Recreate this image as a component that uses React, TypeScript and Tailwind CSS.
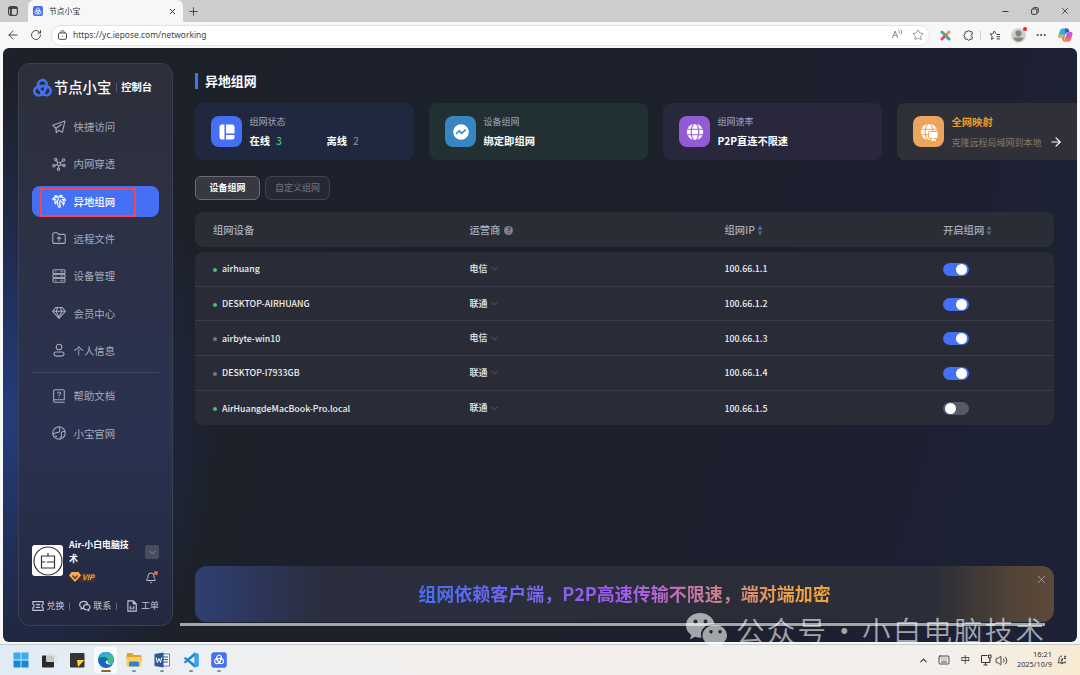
import { ReactNode } from 'react'
import {
  ArrowLeft,
  ArrowRight,
  Bell,
  ChevronDown,
  ChevronUp,
  Ellipsis,
  Keyboard,
  Minus,
  Plus,
  RotateCw,
  Star,
  Volume2,
  X,
} from 'lucide-react'

const devices = [
  { name: 'airhuang', online: true, isp: '电信', ip: '100.66.1.1', on: true },
  { name: 'DESKTOP-AIRHUANG', online: true, isp: '联通', ip: '100.66.1.2', on: true },
  { name: 'airbyte-win10', online: false, isp: '电信', ip: '100.66.1.3', on: true },
  { name: 'DESKTOP-I7933GB', online: false, isp: '联通', ip: '100.66.1.4', on: true },
  { name: 'AirHuangdeMacBook-Pro.local', online: true, isp: '联通', ip: '100.66.1.5', on: false },
]

function Icon({ children, size = 14, width = 1.1 }: { children: ReactNode; size?: number; width?: number }) {
  return (
    <svg
      width={size}
      height={size}
      viewBox="0 0 14 14"
      fill="none"
      stroke="currentColor"
      strokeWidth={width}
      strokeLinecap="round"
      strokeLinejoin="round"
      className="shrink-0"
    >
      {children}
    </svg>
  )
}

const mainNav = [
  { label: '快捷访问', icon: <path d="M.8 5.200 13 1l-2.600 11.200-3.800-1.900L4.300 12.700 4 8.500ZM4 8.500 9.300 4.500" /> },
  {
    label: '内网穿透',
    icon: (
      <>
        <circle cx="7" cy="7" r="1.700" />
        <circle cx="3.700" cy="2.600" r="1.200" />
        <circle cx="11.500" cy="3" r="1.200" />
        <circle cx="1.900" cy="8.800" r="1.200" />
        <circle cx="12" cy="8.600" r="1.200" />
        <circle cx="6.500" cy="12.200" r="1.200" />
        <path d="m4.400 3.600 1.500 2M10.600 3.800 8.300 5.900M3 8.400l2.400-.800M10.900 8.200l-2.300-.600M6.600 11l.200-2.300" />
      </>
    ),
  },
  {
    label: '异地组网',
    active: true,
    icon: (
      <>
        <path d="M6.200 3.800C5.600 1.600 4 1 2.800 2c1 .1 1.500.7 1.700 1.400C2.300 2.800.8 4 .8 5.800c1-.8 2-.8 3-.3C2.300 6.500 2.200 9 3.800 10c0-1.500.4-2.500 1.400-3.400" />
        <path d="M6.600 3.800C7 1.600 8.700.6 10.200 1.800c-1 .1-1.600.7-1.900 1.500 2.500-.7 4.700.5 5.100 3.400-1-1.200-2-1.500-3.200-1.200 2 .9 2.600 3.500 1.300 5.600-.4-1.800-1-2.800-2.200-3.500" />
        <path d="M6.500 4.300c-1.300 2.700-1.400 6 .3 8.900l1.700-.3C7.200 10.500 7.400 8 8.500 6" />
      </>
    ),
  },
  {
    label: '远程文件',
    icon: (
      <>
        <path d="M.800 11.200V2.900c0-.700.500-1.200 1.200-1.200h3l1.600 1.700H12c.700 0 1.200.500 1.200 1.200v6.600c0 .700-.500 1.200-1.200 1.200H2c-.700 0-1.200-.500-1.200-1.200Z" />
        <path d="M7 10V6M5.200 7.600 7 5.800l1.800 1.800" />
      </>
    ),
  },
  {
    label: '设备管理',
    icon: (
      <>
        <rect x="1" y=".8" width="12" height="3.800" rx="1" />
        <rect x="1" y="5.100" width="12" height="3.800" rx="1" />
        <rect x="1" y="9.400" width="12" height="3.800" rx="1" />
        <path d="M3.500 2.700h.600M9 2.700h1.800M3.500 7h.600M9 7h1.800M3.500 11.300h.600M9 11.300h1.800" />
      </>
    ),
  },
  {
    label: '会员中心',
    icon: (
      <>
        <path d="M3.700 1.500h6.600L13.300 5.300 7 12.300.700 5.300Z" />
        <path d="M1 5.300h12M5.500 1.800 4.300 5.300 7 11.800l2.700-6.500L8.500 1.800" />
      </>
    ),
  },
  {
    label: '个人信息',
    icon: (
      <>
        <circle cx="7" cy="4" r="2.800" />
        <path d="M3.600 9h6.800c1 0 1.600.8 1.600 1.600 0 1.400-1 2.500-2.400 2.500H4.400C3 13.100 2 12 2 10.600 2 9.800 2.600 9 3.600 9Z" />
      </>
    ),
  },
]

const helpNav = [
  {
    label: '帮助文档',
    icon: (
      <>
        <path d="M12.300 10.500V2c0-.700-.500-1.200-1.200-1.200H3C2.200.800 1.600 1.300 1.600 2v9.700c0 .900.600 1.500 1.400 1.500h9.300M1.700 10.800h10.600" />
        <path d="M5.700 4.200c.200-1.600 2.800-1.500 2.800.1 0 1.100-1.400 1-1.400 2.200M7.100 8.200v.1" />
      </>
    ),
  },
  {
    label: '小宝官网',
    icon: (
      <>
        <circle cx="7" cy="7" r="6.200" />
        <path d="M7.500 1C6.500 2 8.300 3 7.800 4.800 7.400 6.800 5.500 6.500 4 6.800 2.500 7 2.200 8 1 8.200M13 5.600c-1.800-.4-3.500.1-3.800 1.500-.2 1.500.8 2.200.3 3.500-.4.8-1.200.9-1.700 2.200M3.600 9.800l1 .8" />
      </>
    ),
  },
]

const loop = 'M13.500 17.500C9 16.500 6 12 6.800 8.200 7.800 3 14 1.800 16.300 6c1.100 2.200.9 4.600.2 6.600'

// three interlocked loops of the brand mark
function Knot({ size, color, width = 2.8 }: { size: number; color: string; width?: number }) {
  return (
    <svg width={size} height={size} viewBox="0 0 24 24" fill="none" stroke={color} strokeWidth={width} strokeLinecap="round" className="shrink-0">
      <path d={loop} />
      <path d={loop} transform="rotate(120 12 13.500)" />
      <path d={loop} transform="rotate(240 12 13.500)" />
    </svg>
  )
}

function NavItem({ label, icon, active }: { label: string; icon: ReactNode; active?: boolean }) {
  return (
    <div
      className={
        active
          ? 'relative flex h-[31px] items-center gap-2 rounded-lg bg-[#456ff5] pl-[19.500px] font-medium text-white'
          : 'flex h-[31px] items-center gap-2 pl-[19.500px] text-[#a7aaba]'
      }
    >
      <Icon>{icon}</Icon>
      <span className="mt-px text-[10.400px]">{label}</span>
      {active && <div className="absolute top-0.5 left-[8px] h-[29px] w-[96px] border-2 border-[#f04a4e]"></div>}
    </div>
  )
}

function Browser() {
  return (
    <header className="shrink-0 text-[#333]">
      <div className="flex h-[22px] items-center bg-[#cdcdcd]">
        <div className="flex w-7 justify-center pr-0.5">
          <svg width="10" height="10" viewBox="0 0 10 10" fill="none" stroke="#222">
            <rect x=".7" y=".7" width="8.600" height="8.600" rx="1.500" />
            <path d="M1 2h8M3 2v7" strokeWidth="1.500" />
          </svg>
        </div>
        <div className="flex h-full w-[155px] items-center rounded-t-md bg-[#f7f7f7] pr-[6px] pl-[5px]">
          <div className="flex size-[10px] items-center justify-center rounded-[2px] bg-[#456ff5]">
            <Knot size={8} color="#fff" width={2.5} />
          </div>
          <span className="ml-[6px] text-[7.800px]">节点小宝</span>
          <X size={9} className="ml-auto" strokeWidth={2.6} />
        </div>
        <Plus size={13} className="ml-[4px]" strokeWidth={1.6} />
        <div className="mr-[10px] ml-auto flex items-center gap-[21px]">
          <Minus size={9} strokeWidth={2.5} />
          <svg width="8" height="8" viewBox="0 0 8 8" fill="none" stroke="#333">
            <rect x=".6" y="2" width="5.300" height="5.300" rx="1" />
            <path d="M2.200 2V1.500Q2.200.6 3.200.6h2.600q1.500 0 1.500 1.500v2.600q0 1-1 1H6" />
          </svg>
          <X size={10} strokeWidth={2} />
        </div>
      </div>
      <div className="flex h-[26px] items-center bg-[#f7f7f7]">
        <ArrowLeft size={14} strokeWidth={1.5} className="ml-[6px]" />
        <RotateCw size={12} strokeWidth={1.7} className="ml-[10px]" />
        <div className="ml-[9px] flex h-[21px] w-[879px] items-center rounded-full border border-[#e3e3e3] bg-white pr-[5px] pl-[6px]">
          <svg width="9" height="10" viewBox="0 0 9 10" fill="none" stroke="#333" strokeWidth=".9">
            <rect x=".5" y="3" width="8" height="6.300" rx="1.200" />
            <path d="M2.700 3c0-3.200 3.600-3.200 3.600 0M4.500 5.800v.8" />
          </svg>
          <span className="ml-[6px] font-['Noto_Sans'] text-[8.450px] leading-none text-[#444]">https://yc.iepose.com/networking</span>
          <span className="ml-auto font-['Noto_Sans'] text-[9.500px] leading-none text-[#777]">A</span>
          <svg width="5" height="8" viewBox="0 0 5 8" fill="none" stroke="#777" strokeWidth=".8" className="-mt-1">
            <path d="M.5 1.500c1 .7 1 2 .5 3M2.500.5c1.500 1.500 1.500 3.500.5 5" />
          </svg>
          <Star size={12} strokeWidth={1.5} className="ml-[9px] text-[#777]" />
        </div>
        <svg width="11" height="11" viewBox="0 0 11 11" strokeWidth="3" strokeLinecap="round" className="ml-[10px]">
          <path d="m2 2 3.500 3.500" stroke="#45a9a5" />
          <path d="m9 2-3.500 3.500" stroke="#ef9650" />
          <path d="m2 9 3.500-3.500" stroke="#ef4663" />
          <path d="m9 9-3.500-3.500" stroke="#41a5a2" />
        </svg>
        <svg width="11" height="11" viewBox="0 0 11 11" fill="none" stroke="#444" strokeLinejoin="round" className="ml-[12px]">
          <path d="M3 1.700h1.500c.2-1.500 2-1.500 2.200 0h1.600q1 0 1 1v1.600c-2 0-2 2.400 0 2.400v1.600q0 1-1 1H6.700c-.2 1.500-2 1.500-2.200 0H3q-1 0-1-1V6.700C.3 6.600.3 4.500 2 4.300V2.700q0-1 1-1Z" />
        </svg>
        <div className="ml-[6px] h-[10px] w-px bg-[#d2d2d2]"></div>
        <svg width="12" height="11" viewBox="0 0 12 11" fill="none" stroke="#444" strokeLinejoin="round" className="ml-[8px]">
          <path d="M7 3.800 5.200 1 4 3.700 1 4l2.200 2.200-.7 3.100L5 8M7.500 4.500H11M7.500 6.700H11M7.500 8.900H11" />
        </svg>
        <div className="relative ml-[10px]">
          <svg width="15" height="15" viewBox="0 0 15 15">
            <circle cx="7.500" cy="7.500" r="7.300" fill="#d0cecb" />
            <circle cx="7.500" cy="5.500" r="3" fill="#88827e" />
            <path d="M2.500 10.500q0-1 1-1h8q1 0 1 1-2 3-5 3t-5-3Z" fill="#88827e" />
          </svg>
          <div className="absolute -top-px -right-px size-1 rounded-full bg-[#e52828]"></div>
        </div>
        <Ellipsis size={12} className="ml-[9px]" />
        <svg width="15" height="14" viewBox="0 0 15 14" className="ml-[11px]">
          <path d="M4.500.500h4.200L6.500 8.500Q6 10 4.500 10H2Q0 10 .500 7.500L2 2.500Q2.700.500 4.500.500Z" fill="#38a9d8" />
          <path d="M.700 6.500h5.500l-.500 2Q5 10 4 10H2Q0 10 .700 6.500Z" fill="#b8c54a" />
          <path d="M6.500 13.500h4.200q1.600 0 2.200-2l1.500-5Q15 4 13 4h-2.500Q9 4 8.600 5.500Z" fill="#c45bd0" />
          <path d="M7 10h6q-.800 3.500-2.300 3.500H6Z" fill="#f08050" />
          <path d="M7 .500h2.500q1 0 1.500 2l.500 1.500H10Q8.500 4 8 5.500L7.500 7Z" fill="#2157d2" />
          <path d="M4 10q1.500 0 2.200-1.500L7 7l-1 6.500Q4.500 13.500 4 10Z" fill="#f26d4d" />
        </svg>
      </div>
    </header>
  )
}

function Sidebar() {
  return (
    <aside className="flex w-[155px] shrink-0 flex-col rounded-xl border border-[#3b4153] bg-[linear-gradient(180deg,#2d2f3a_0%,#2c3145_30%,#2a3250_65%,#232941_100%)] px-[13px]">
      <div className="flex h-[46px] items-center text-white">
        <Knot size={21} color="#456ff5" />
        <span className="ml-px text-[14.300px] leading-none font-medium">节点小宝</span>
        <div className="mx-[4.500px] h-[9px] w-px bg-[#555a69]"></div>
        <span className="text-[10.300px] leading-none font-bold">控制台</span>
      </div>
      <nav className="mt-px flex flex-col gap-[6.300px]">
        {mainNav.map((item) => (
          <NavItem key={item.label} {...item} />
        ))}
      </nav>
      <div className="mt-[6px] mb-[7.500px] h-px shrink-0 bg-[#3f4661]"></div>
      <nav className="flex flex-col gap-[6.300px]">
        {helpNav.map((item) => (
          <NavItem key={item.label} {...item} />
        ))}
      </nav>

      {/* User */}
      <div className="mt-auto flex h-[47px]">
        <div className="mt-[8px] flex size-[31px] shrink-0 items-center justify-center rounded-[3px] bg-white">
          <svg width="30" height="30" viewBox="0 0 30 30" fill="none" stroke="#333" strokeWidth="1.200">
            <circle cx="15" cy="15" r="14" />
            <path d="M8.500 10h13v12h-13ZM8.500 16h4M14 16h7.500M15 7v3" />
          </svg>
        </div>
        <div className="ml-[6px] w-[64px]">
          <p className="mt-px text-[8.900px] leading-[14px] font-bold text-white">Air-小白电脑技术</p>
          <div className="mt-[6px] flex items-center">
            <svg width="12" height="10" viewBox="0 0 12 10" className="z-10">
              <path d="M2.500 0h7L12 3.500 6 10 0 3.500Z" fill="#f6ac52" />
              <path d="m3.500 3.500 2.500 3 2.500-3" fill="none" stroke="#5c3518" strokeWidth="1.400" />
            </svg>
            <span className="-ml-1 flex h-[9px] items-center rounded-sm bg-[#45302a] pr-[2px] pl-[5px] text-[7.500px] leading-none font-bold text-[#f0a650] italic">VIP</span>
          </div>
        </div>
        <div className="ml-auto flex flex-col items-center">
          <div className="mt-[8px] flex size-[14px] items-center justify-center rounded-[2px] bg-[#484c5d] text-[#8e919d]">
            <ChevronDown size={11} />
          </div>
          <div className="relative mt-[13px] mr-[2px] text-[#c4c7d3]">
            <Bell size={12} strokeWidth={1.9} />
            <div className="absolute -top-px -right-px size-1 rounded-full bg-[#f76b3b]"></div>
          </div>
        </div>
      </div>
      <div className="mt-[15px] mb-[12px] flex h-[14px] items-center justify-between text-[9px] text-[#c3c6d2]">
        <div className="flex items-center gap-[2.500px]">
          <Icon size={12} width={1.4}>
            <path d="M1 2h12v3c-2 .5-2 3.500 0 4v3H1V9c2-.5 2-3.500 0-4ZM5 5.500h4M5 8.500h4" />
          </Icon>
          兑换
        </div>
        <div className="-ml-1 h-[7px] w-px bg-[#646a7d]"></div>
        <div className="flex items-center gap-[2px]">
          <Icon size={12} width={1.4}>
            <path d="M5 9.500 2.500 10.500l.3-1.600C-.8 6 1 1.500 5.500 1.500c2.500 0 4.200 1.500 4.500 3.300M9 5.200c-5 .3-5 6 0 6.200l2.500 1-.2-1.500c3-2 1.200-5.700-2.300-5.700Z" />
          </Icon>
          联系
        </div>
        <div className="-ml-1 h-[7px] w-px bg-[#646a7d]"></div>
        <div className="flex items-center gap-[3px]">
          <Icon size={12} width={1.3}>
            <path d="M8.500 1H2.200v12h9.800V4.500ZM8.500 1v3.500H12M5 10.500v-3M7 10.500V9M9.200 10.500V7.500" />
          </Icon>
          工单
        </div>
      </div>
    </aside>
  )
}

function GlobeGlyph({ stroke }: { stroke: string }) {
  return (
    <>
      <circle cx="9" cy="9" r="8.200" fill="#fff" />
      <g fill="none" stroke={stroke} strokeWidth="1.100">
        <ellipse cx="9" cy="9" rx="3.800" ry="8.600" />
        <path d="M0 6.200h18M0 11.800h18" />
      </g>
    </>
  )
}

function Card({ className, iconClass, icon, children }: { className: string; iconClass: string; icon: ReactNode; children: ReactNode }) {
  return (
    <div className={`flex h-[57px] w-[219px] shrink-0 items-center rounded-lg pl-4 ${className}`}>
      <div className={`flex size-[31px] shrink-0 items-center justify-center rounded-lg ${iconClass}`}>
        <svg width="18" height="18" viewBox="0 0 18 18">
          {icon}
        </svg>
      </div>
      <div className="ml-[7.500px]">{children}</div>
    </div>
  )
}

function Cards() {
  return (
    <div className="flex gap-[15px] overflow-hidden">
      <Card
        className="bg-[#20283f]"
        iconClass="bg-[#456ff5]"
        icon={
          <path
            d="M4 1.500h2.500v15H4q-2.500 0-2.500-2.500V4Q1.500 1.500 4 1.500ZM8 1.500h6q2.500 0 2.500 2.500v6.500H8ZM8 12h8.500v2q0 2.500-2.500 2.500H8Z"
            fill="#fff"
          />
        }
      >
        <p className="text-[9px] leading-[14px] text-[#a2a6b4]">组网状态</p>
        <div className="mt-[3px] flex text-[10.300px] leading-[17px] font-bold text-white">
          <span className="w-[77px]">
            在线<span className="ml-[6px] font-medium text-[#43bd7d]">3</span>
          </span>
          <span>
            离线<span className="ml-[6px] font-normal text-[#8e93a1]">2</span>
          </span>
        </div>
      </Card>
      <Card
        className="bg-[#203033]"
        iconClass="bg-[#3985c0]"
        icon={
          <>
            <circle cx="9" cy="9" r="7.800" fill="#fff" />
            <path d="m4 11 3.200-3.200 2.300 2.600L14 6.500" fill="none" stroke="#3985c0" strokeWidth="1.600" />
          </>
        }
      >
        <p className="text-[9px] leading-[14px] text-[#a2a6b4]">设备组网</p>
        <p className="mt-[3px] text-[10.300px] leading-[17px] font-bold text-white">绑定即组网</p>
      </Card>
      <Card className="bg-[#29273c]" iconClass="bg-[#935bd3]" icon={<GlobeGlyph stroke="#935bd3" />}>
        <p className="text-[9px] leading-[14px] text-[#a2a6b4]">组网速率</p>
        <p className="mt-[3px] text-[10.200px] leading-[17px] font-bold text-white">P2P直连不限速</p>
      </Card>
      <Card
        className="bg-[#303138]"
        iconClass="bg-[#eba55d]"
        icon={
          <>
            <GlobeGlyph stroke="#eba55d" />
            <rect x="8.500" y="8.500" width="9.500" height="7" rx="1" fill="#fff" stroke="#eba55d" />
            <path d="M11 17h5M13.200 15v2" stroke="#fff" strokeWidth="1.500" />
          </>
        }
      >
        <p className="text-[10.300px] leading-[17px] font-bold text-[#f2992e]">全网映射</p>
        <div className="mt-[4px] flex items-center text-[9px] leading-[17px] whitespace-nowrap text-[#8a7768]">
          克隆远程局域网到本地
          <ArrowRight size={14} className="ml-[7px] text-white" />
        </div>
      </Card>
    </div>
  )
}

function Sorter({ up }: { up: string }) {
  return (
    <svg width="6" height="11" viewBox="0 0 6 11" className="ml-[2px]">
      <path d="M3 .5 5.300 4.700H.700Z" fill={up} />
      <path d="M3 10.500.700 6.300h4.600Z" fill="#646873" />
    </svg>
  )
}

function Table() {
  return (
    <>
      <div className="mt-[12px] flex h-[35px] items-center rounded-lg bg-[#292e36] pt-px pl-[18px] text-[10.300px] font-medium text-[#a9acb9]">
        <span className="w-[256.500px]">组网设备</span>
        <span className="flex w-[255px] items-center">
          运营商
          <span className="ml-[4px] flex size-[9px] items-center justify-center rounded-full bg-[#7d808d] text-[7px] leading-none font-bold text-[#292e36]">?</span>
        </span>
        <span className="flex w-[218.500px] items-center">
          组网IP
          <Sorter up="#456ff5" />
        </span>
        <span className="flex items-center">
          开启组网
          <Sorter up="#646873" />
        </span>
      </div>
      <div className="mt-[5px] rounded-lg bg-[#292c37]">
        {devices.map((d) => (
          <div
            key={d.name}
            className="flex h-[34.700px] items-center border-b border-[#3a3d49] pl-[18px] text-[8.800px] font-medium text-[#eeeff3] last:border-b-0"
          >
            <div className="flex w-[256.500px] items-center">
              <div className={`mt-0.5 mr-[5px] size-[4px] rounded-full ${d.online ? 'bg-[#4abc82]' : 'bg-[#737785]'}`}></div>
              {d.name}
            </div>
            <div className="flex w-[255px] items-center text-[9px] font-bold text-[#d5d7df]">
              {d.isp}
              <ChevronDown size={11} className="ml-[1.500px] text-[#626672]" />
            </div>
            <span className="w-[218.500px]">{d.ip}</span>
            <div
              className={`mt-px flex h-[13px] w-[26px] items-center rounded-full px-[2px] ${d.on ? 'justify-end bg-[#456ff5]' : 'bg-[#575a68]'}`}
            >
              <div className="size-[11px] rounded-full bg-white"></div>
            </div>
          </div>
        ))}
      </div>
    </>
  )
}

function Console() {
  return (
    <section className="mx-[3px] flex h-[594px] overflow-hidden rounded-md bg-[radial-gradient(ellipse_215px_330px_at_0%_62%,#243d7d_0%,#202c50_50%,transparent_100%),linear-gradient(105deg,#1d2129_0%,#1c202b_55%,#1c2136_100%)] pt-[15px] pl-[15px]">
      <div className="flex h-[563px]">
        <Sidebar />
      </div>
      <main className="flex h-[563px] min-w-0 flex-1 flex-col pl-[7px]">
        <div className="flex min-h-0 flex-1 flex-col pl-[15px]">
          <div className="mt-[10px] mb-[14px] flex h-4 items-center">
            <div className="h-4 w-[3px] bg-[#456ff5]"></div>
            <h1 className="ml-[7px] text-[12.900px] leading-none font-bold text-white">异地组网</h1>
          </div>
          <Cards />
          <div className="mr-[23px] flex flex-1 flex-col">
            <div className="mt-4 flex gap-[5px] text-[9px]">
              <button className="h-6 w-[65px] rounded-md border border-[#696c77] bg-[#363842] font-bold text-white">设备组网</button>
              <button className="h-6 w-[65px] rounded-md border border-[#41444e] bg-[#262934] text-[#737681]">自定义组网</button>
            </div>
            <Table />
            {/* Banner */}
            <div className="relative mt-auto flex h-[56px] items-center justify-center rounded-xl bg-[linear-gradient(90deg,#303f72_0%,#2d3963_5%,#2a2e3e_14%,#2a2d39_50%,#2b2d38_86%,#554536_96%,#5b4939_100%)]">
              <p className="-mt-px bg-[linear-gradient(90deg,#456ff5_0%,#a25cf0_50%,#f2a23c_92%)] bg-clip-text text-[18px] font-bold text-transparent">
                组网依赖客户端，P2P高速传输不限速，端对端加密
              </p>
              <X size={13} strokeWidth={1.7} className="absolute top-[7px] right-[6px] text-[#a5a3a3]" />
            </div>
          </div>
        </div>
        <div className="mt-px h-[3px] w-[865px] bg-[#a4a5a5]"></div>
      </main>
    </section>
  )
}

function TaskApp({ children, open, active }: { children: ReactNode; open?: boolean; active?: boolean }) {
  return (
    <div className={`relative flex h-[26px] w-[23px] items-center justify-center rounded-[3px] ${active ? 'bg-[#f9fbfd]' : ''}`}>
      <svg width="16" height="16" viewBox="0 0 16 16" className="-mt-px">
        {children}
      </svg>
      {open && <div className={`absolute bottom-px h-[2px] rounded-full ${active ? 'w-[10px] bg-[#966236]' : 'w-[4px] bg-[#8c8c8c]'}`}></div>}
    </div>
  )
}

function Taskbar() {
  return (
    <footer className="mt-[2px] flex h-[31px] items-center border-t border-[#c6c9cc] bg-[linear-gradient(90deg,#e0ebf5_0%,#edf0f3_18%,#f5efeb_50%,#f1eeec_68%,#f3f0eb_88%,#f8ead2_100%)] pl-[9px]">
      <div className="flex items-center gap-[5.400px]">
        <TaskApp>
          <path d="M.5.5h7.100v7.100H.5ZM8.400.5h7.100v7.100H8.400Z" fill="#36aee8" />
          <path d="M.5 8.400h7.100v7.100H.5ZM8.400 8.400h7.100v7.100H8.400Z" fill="#1688da" />
        </TaskApp>
        <TaskApp>
          <rect x="1" y="3.500" width="12" height="12" rx="1" fill="#292929" />
          <rect x="5" y="1" width="11" height="9" rx="1" fill="#e4e4e4" fillOpacity=".85" />
        </TaskApp>
        <TaskApp>
          <rect x="1" y="1" width="14.500" height="14.500" rx="1" fill="#333" />
          <path d="M8 8h7.500L9 15Z" fill="#fbd23b" />
        </TaskApp>
        <TaskApp open active>
          <circle cx="8" cy="8" r="8" fill="#1768bd" />
          <path d="M0 7C1 1 6-.5 9.500.2 14 1 16 4.500 16 7.500c0 3-2.500 4-4.500 3.800-2.200-.2-2.300-1.300-1.500-2.300C11 5 4 3 0 7Z" fill="#3fbd94" />
          <path d="M0 7C1 1 6-.5 9.500.2c2.500.5 4 1.500 5 3C9 2 4 3 0 7Z" fill="#34aadf" />
          <path d="M10 9c-.8 1-.5 2.200 1.500 2.600 1.700.3 3-.2 4.200-1.400-1 2-3.500 2.800-6 2C6.500 11.500 7.500 7 10 9Z" fill="#eef5fa" />
        </TaskApp>
        <TaskApp open>
          <path d="M.5 2.500Q.5 1 2 1h4l2 2h6q1.500 0 1.500 1.500V8H.5Z" fill="#e3a12c" />
          <path d="M.5 5h15v8.500q0 1-1 1h-13q-1 0-1-1Z" fill="#fbd05b" />
          <path d="M3 14.500V11q0-1.500 1.500-1.500h7Q13 9.500 13 11v3.500Z" fill="#2f83d2" />
        </TaskApp>
        <TaskApp open>
          <rect x="7.500" y="2" width="8" height="12" fill="#f4f6fb" stroke="#2b579a" strokeWidth=".7" />
          <path d="M9 5h5M9 7.500h5M9 10h5" stroke="#2b579a" />
          <path d="m.5 2 9-1.500v15L.5 14Z" fill="#2b579a" />
          <path d="m2.200 5.500 1.100 5L5 6.500l1.500 4 1.200-5" fill="none" stroke="#fff" />
        </TaskApp>
        <TaskApp open>
          <path d="M11.500.5 15.500 2v12l-4 1.500L.7 6.300 2.200 5 11.700 12V4L2.200 11.500.7 10Z" fill="#1d86cf" />
          <path d="m11.500.5 4 1.500v12l-4 1.500Z" fill="#35a5ee" />
        </TaskApp>
        <TaskApp open>
          <rect x=".2" y=".2" width="15.600" height="15.600" rx="3" fill="#456ff5" />
          <g transform="translate(2.300 1.500) scale(.48)" fill="none" stroke="#fff" strokeWidth="2.500" strokeLinecap="round">
            <path d={loop} />
            <path d={loop} transform="rotate(120 12 13.500)" />
            <path d={loop} transform="rotate(240 12 13.500)" />
          </g>
        </TaskApp>
      </div>
      <div className="mr-[13px] ml-auto flex items-center text-[#333]">
        <ChevronUp size={11} strokeWidth={2.2} />
        <Keyboard size={12} strokeWidth={1.7} className="ml-[9px]" />
        <span className="ml-[10px] text-[9.500px] leading-none">中</span>
        <svg width="12" height="12" viewBox="0 0 12 12" fill="none" stroke="#333" className="ml-[10px]">
          <path d="M7.500 1.500h-6v7H10V6M3.500 11h4M5.500 8.500V11M8.500 1h2.500v3H8.500ZM9.800 4v3" />
        </svg>
        <Volume2 size={13} strokeWidth={1.7} className="ml-[3px]" />
        <div className="-mt-0.5 ml-[9px] text-right font-['Noto_Sans'] text-[7.400px] leading-[10px]">
          <p>16:21</p>
          <p>2025/10/9</p>
        </div>
        <svg width="10" height="10" viewBox="0 0 10 10" fill="none" stroke="#333" strokeWidth=".9" className="ml-[5px]">
          <path d="M5 1C3 1 2 2.400 2 4v2L1 7.800h7.500L8 6.200M3.800 8q1 2 2.200 0M4 4h2L4 6h2M7 1.300h2L7 3.500h2" />
        </svg>
      </div>
    </footer>
  )
}

export default function App() {
  return (
    <div className="relative flex h-[675px] w-[1080px] flex-col overflow-hidden bg-[#f7f7f7] font-['Noto_Sans_CJK_SC',sans-serif]">
      <Browser />
      <Console />
      <Taskbar />

      {/* Watermark */}
      <div className="absolute top-[612px] left-[685px] flex items-start text-white/60">
        <svg width="43" height="35" viewBox="0 0 43 35" fill="currentColor" fillRule="evenodd">
          <path d="M15.500 1C7 1 1 6.500 1 13.500c0 4 2 7.200 5.300 9.500L5 27.500l5.200-2.700q3 1 6.300.8C14 17.500 21 11.500 29.500 12 28 5 22 1 15.500 1ZM10.500 7.500a2 2 0 1 0 .01 0ZM20.500 7.500a2 2 0 1 0 .01 0Z" />
          <path d="M30 13c-7 0-12.500 4.700-12.500 10.500S23 34 30 34q2 0 4-.6l4 1.600-1-3.300c3.200-2 5-4.900 5-8.200C42 17.700 37 13 30 13ZM26 18a1.700 1.700 0 1 0 .01 0ZM35 18a1.700 1.700 0 1 0 .01 0Z" />
        </svg>
        <div className="-mt-px ml-[8px] flex text-[28.500px] leading-[38px] font-[350] whitespace-nowrap">
          <span className="w-[94px] tracking-[2.200px]">公众号</span>
          <span className="w-[32px]">·</span>
          <span className="tracking-[2.200px]">小白电脑技术</span>
        </div>
      </div>
    </div>
  )
}
